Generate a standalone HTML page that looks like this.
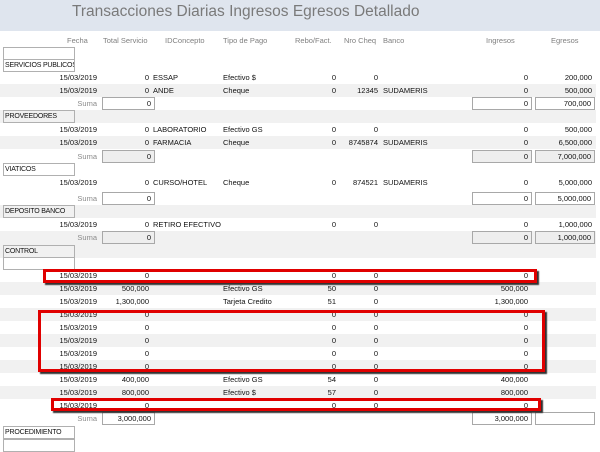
<!DOCTYPE html>
<html><head><meta charset="utf-8"><style>
body{margin:0;width:600px;height:452px;overflow:hidden;background:#fff;font-family:"Liberation Sans",sans-serif;font-size:7.5px;color:#111;position:relative}
.title{position:absolute;left:0;top:0;width:600px;height:31px;background:#dfe5ee}
.title span{position:absolute;left:72px;top:3px;font-size:15.5px;color:#7a7a7a}
.hd{position:absolute;top:35px;color:#808080;line-height:12px}
.row{position:absolute;left:0;width:596px;height:13px;line-height:13px}
.g{background:#f1f1f1}
.row span{position:absolute;top:0;white-space:nowrap}
.f{left:30px;width:67px;text-align:right}
.t{left:95px;width:54px;text-align:right}
.c{left:153px}.p{left:223px}
.r{left:290px;width:46px;text-align:right}
.n{left:340px;width:38px;text-align:right}
.b{left:383px}
.i{left:460px;width:68px;text-align:right}
.e{left:530px;width:62px;text-align:right}
.sl{left:50px;width:47px;text-align:right;color:#8a8a8a}
.box{position:absolute;border:1px solid #a8a8a8;box-sizing:border-box;height:13px;line-height:11px;text-align:right;padding-right:3px;background:#fff}
.bg{background:#eeeeee}
.lab{position:absolute;left:3px;width:72px;height:13px;border:1px solid #b0b0b0;box-sizing:border-box;line-height:11px;padding-left:1px;background:#fff;font-size:7px;letter-spacing:-0.2px;overflow:hidden;white-space:nowrap}
.lab.g2{background:#f1f1f1}
.red{position:absolute;border:3px solid #e00000;box-shadow:2px 2px 1px #333;box-sizing:border-box}
</style></head><body>
<div class="title"><span>Transacciones Diarias Ingresos Egresos Detallado</span></div>
<div class="hd" style="left:67px">Fecha</div>
<div class="hd" style="left:103px">Total Servicio</div>
<div class="hd" style="left:165px">IDConcepto</div>
<div class="hd" style="left:223px">Tipo de Pago</div>
<div class="hd" style="left:295px">Rebo/Fact.</div>
<div class="hd" style="left:344px">Nro Cheq</div>
<div class="hd" style="left:383px">Banco</div>
<div class="hd" style="left:486px">Ingresos</div>
<div class="hd" style="left:551px">Egresos</div>

<div class="lab" style="top:47px"></div>
<div class="lab" style="top:59px">SERVICIOS PUBLICOS</div>
<div class="row" style="top:71px"><span class="f">15/03/2019</span><span class="t">0</span><span class="c">ESSAP</span><span class="p">Efectivo $</span><span class="r">0</span><span class="n">0</span><span class="i">0</span><span class="e">200,000</span></div>
<div class="row g" style="top:84px"><span class="f">15/03/2019</span><span class="t">0</span><span class="c">ANDE</span><span class="p">Cheque</span><span class="r">0</span><span class="n">12345</span><span class="b">SUDAMERIS</span><span class="i">0</span><span class="e">500,000</span></div>
<div class="row" style="top:97px"><span class="sl">Suma</span></div>
<div class="box" style="left:102px;top:97px;width:53px">0</div>
<div class="box" style="left:472px;top:97px;width:60px">0</div>
<div class="box" style="left:535px;top:97px;width:60px">700,000</div>

<div class="row g" style="top:110px"></div>
<div class="lab g2" style="top:110px">PROVEEDORES</div>
<div class="row" style="top:123px"><span class="f">15/03/2019</span><span class="t">0</span><span class="c">LABORATORIO</span><span class="p">Efectivo GS</span><span class="r">0</span><span class="n">0</span><span class="i">0</span><span class="e">500,000</span></div>
<div class="row g" style="top:136px"><span class="f">15/03/2019</span><span class="t">0</span><span class="c">FARMACIA</span><span class="p">Cheque</span><span class="r">0</span><span class="n">8745874</span><span class="b">SUDAMERIS</span><span class="i">0</span><span class="e">6,500,000</span></div>
<div class="row" style="top:150px"><span class="sl">Suma</span></div>
<div class="box bg" style="left:102px;top:150px;width:53px">0</div>
<div class="box bg" style="left:472px;top:150px;width:60px">0</div>
<div class="box bg" style="left:535px;top:150px;width:60px">7,000,000</div>

<div class="lab" style="top:163px">VIATICOS</div>
<div class="row" style="top:176px"><span class="f">15/03/2019</span><span class="t">0</span><span class="c">CURSO/HOTEL</span><span class="p">Cheque</span><span class="r">0</span><span class="n">874521</span><span class="b">SUDAMERIS</span><span class="i">0</span><span class="e">5,000,000</span></div>
<div class="row" style="top:192px"><span class="sl">Suma</span></div>
<div class="box" style="left:102px;top:192px;width:53px">0</div>
<div class="box" style="left:472px;top:192px;width:60px">0</div>
<div class="box" style="left:535px;top:192px;width:60px">5,000,000</div>

<div class="row g" style="top:205px"></div>
<div class="lab g2" style="top:205px">DEPOSITO BANCO</div>
<div class="row" style="top:218px"><span class="f">15/03/2019</span><span class="t">0</span><span class="c">RETIRO EFECTIVO</span><span class="r">0</span><span class="n">0</span><span class="i">0</span><span class="e">1,000,000</span></div>
<div class="row g" style="top:231px;height:14px"><span class="sl">Suma</span></div>
<div class="box bg" style="left:102px;top:231px;width:53px">0</div>
<div class="box bg" style="left:472px;top:231px;width:60px">0</div>
<div class="box bg" style="left:535px;top:231px;width:60px">1,000,000</div>

<div class="row g" style="top:245px"></div>
<div class="lab g2" style="top:245px">CONTROL</div>
<div class="lab" style="top:257px"></div>
<div class="row" style="top:269px"><span class="f">15/03/2019</span><span class="t">0</span><span class="r">0</span><span class="n">0</span><span class="i">0</span></div>
<div class="row g" style="top:282px"><span class="f">15/03/2019</span><span class="t">500,000</span><span class="p">Efectivo GS</span><span class="r">50</span><span class="n">0</span><span class="i">500,000</span></div>
<div class="row" style="top:295px"><span class="f">15/03/2019</span><span class="t">1,300,000</span><span class="p">Tarjeta Credito</span><span class="r">51</span><span class="n">0</span><span class="i">1,300,000</span></div>
<div class="row g" style="top:308px"><span class="f">15/03/2019</span><span class="t">0</span><span class="r">0</span><span class="n">0</span><span class="i">0</span></div>
<div class="row" style="top:321px"><span class="f">15/03/2019</span><span class="t">0</span><span class="r">0</span><span class="n">0</span><span class="i">0</span></div>
<div class="row g" style="top:334px"><span class="f">15/03/2019</span><span class="t">0</span><span class="r">0</span><span class="n">0</span><span class="i">0</span></div>
<div class="row" style="top:347px"><span class="f">15/03/2019</span><span class="t">0</span><span class="r">0</span><span class="n">0</span><span class="i">0</span></div>
<div class="row g" style="top:360px"><span class="f">15/03/2019</span><span class="t">0</span><span class="r">0</span><span class="n">0</span><span class="i">0</span></div>
<div class="row" style="top:373px"><span class="f">15/03/2019</span><span class="t">400,000</span><span class="p">Efectivo GS</span><span class="r">54</span><span class="n">0</span><span class="i">400,000</span></div>
<div class="row g" style="top:386px"><span class="f">15/03/2019</span><span class="t">800,000</span><span class="p">Efectivo $</span><span class="r">57</span><span class="n">0</span><span class="i">800,000</span></div>
<div class="row" style="top:399px"><span class="f">15/03/2019</span><span class="t">0</span><span class="r">0</span><span class="n">0</span><span class="i">0</span></div>
<div class="row" style="top:412px"><span class="sl">Suma</span></div>
<div class="box" style="left:102px;top:412px;width:53px">3,000,000</div>
<div class="box" style="left:472px;top:412px;width:60px">3,000,000</div>
<div class="box" style="left:535px;top:412px;width:60px"></div>

<div class="lab" style="top:426px">PROCEDIMIENTO</div>
<div class="lab" style="top:439px"></div>

<div class="red" style="left:43px;top:269px;width:494px;height:14px"></div>
<div class="red" style="left:38px;top:310px;width:507px;height:62px"></div>
<div class="red" style="left:51px;top:398px;width:490px;height:13px"></div>
</body></html>
